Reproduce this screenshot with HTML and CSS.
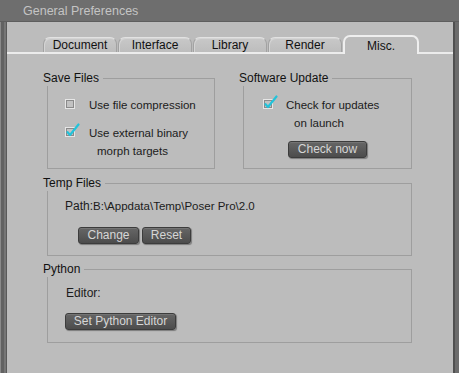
FILE: index.html
```html
<!DOCTYPE html>
<html lang="en">
<head>
  <meta charset="utf-8">
  <title>General Preferences</title>
  <link rel="stylesheet" href="styles.css">
</head>
<body>
  <div class="window">
    <div class="titlebar">General Preferences</div>
    <div class="frame">
      <main class="panel">
        <nav class="tabs">
          <div class="tab">Document</div>
          <div class="tab">Interface</div>
          <div class="tab">Library</div>
          <div class="tab">Render</div>
          <div class="tab active">Misc.</div>
        </nav>

        <div class="content">
          <div class="row">
            <section class="group save-files">
              <h3 class="group-title">Save Files</h3>
              <div class="check-row">
                <svg class="checkbox" width="15" height="15" viewBox="0 0 15 15">
                  <rect x="0.5" y="4.5" width="9" height="9" fill="#c2c2c2" stroke="#e6e6e6"/>
                  <rect x="1.5" y="5.5" width="7" height="7" fill="none" stroke="#8a8a8a"/>
                </svg>
                <span class="check-label">Use file compression</span>
              </div>
              <div class="check-row">
                <svg class="checkbox" width="15" height="15" viewBox="0 0 15 15">
                  <rect x="0.5" y="4.5" width="9" height="9" fill="#c2c2c2" stroke="#e6e6e6"/>
                  <rect x="1.5" y="5.5" width="7" height="7" fill="none" stroke="#8a8a8a"/>
                  <path d="M2.6 9.2 L5 12 L13.5 1.5" fill="none" stroke="#22c3da" stroke-width="2.2" stroke-linecap="round" stroke-linejoin="round"/>
                </svg>
                <span class="check-label">Use external binary<br><span class="indent">morph targets</span></span>
              </div>
            </section>

            <section class="group software-update">
              <h3 class="group-title">Software Update</h3>
              <div class="check-row">
                <svg class="checkbox" width="15" height="15" viewBox="0 0 15 15">
                  <rect x="0.5" y="4.5" width="9" height="9" fill="#c2c2c2" stroke="#e6e6e6"/>
                  <rect x="1.5" y="5.5" width="7" height="7" fill="none" stroke="#8a8a8a"/>
                  <path d="M2.6 9.2 L5 12 L13.5 1.5" fill="none" stroke="#22c3da" stroke-width="2.2" stroke-linecap="round" stroke-linejoin="round"/>
                </svg>
                <span class="check-label">Check for updates<br><span class="indent">on launch</span></span>
              </div>
              <div class="center">
                <button type="button" class="btn btn-check">Check now</button>
              </div>
            </section>
          </div>

          <section class="group temp-files">
            <h3 class="group-title">Temp Files</h3>
            <p class="field"><span class="field-name">Path:</span><span class="path">B:\Appdata\Temp\Poser Pro\2.0</span></p>
            <div class="buttons">
              <button type="button" class="btn btn-change">Change</button>
              <button type="button" class="btn btn-reset">Reset</button>
            </div>
          </section>

          <section class="group python">
            <h3 class="group-title">Python</h3>
            <p class="field"><span class="field-name">Editor:</span></p>
            <div class="buttons-left">
              <button type="button" class="btn btn-python">Set Python Editor</button>
            </div>
          </section>
        </div>
      </main>
    </div>
  </div>
</body>
</html>
```

FILE: styles.css
```css
html, body {
  margin: 0;
  padding: 0;
}
body {
  background-color: #6c6c6c;
  font-family: "Liberation Sans", Arial, sans-serif;
  width: 459px;
  height: 373px;
  overflow: hidden;
}
.window {
  display: flex;
  flex-direction: column;
  height: 373px;
}
.titlebar {
  height: 21px;
  line-height: 22px;
  padding-left: 23px;
  font-size: 12.5px;
  color: #c4c4c4;
  background-color: #6e6e6e;
  border-bottom: 1px solid #5e5e5e;
}
.frame {
  flex: 1;
  display: flex;
  padding-left: 7px;
  padding-right: 6px;
  background: linear-gradient(to right, #8a8a8a 0, #8a8a8a 1px, #626262 1px, #626262 4px, #767676 4px, #767676 6px, #5a5a5a 6px, #5a5a5a 7px, transparent 7px),
    linear-gradient(to left, #6c6c6c 0, #6c6c6c 4px, #505050 4px, #505050 6px, transparent 6px);
  background-color: #6c6c6c;
}
.panel {
  flex: 1;
  background-color: #bcbcbc;
  color: #1b1b1b;
}

/* tabs */
.tabs {
  display: flex;
  align-items: flex-end;
  height: 17px;
  margin-top: 13px;
  padding-left: 36px;
  border-bottom: 2px solid #ececec;
}
.tab {
  box-sizing: border-box;
  width: 74px;
  height: 15px;
  margin-right: 1px;
  border: 1px solid #a2a2a2;
  border-top-color: #e2e2e2;
  border-bottom: none;
  border-radius: 7px 7px 0 0;
  background: linear-gradient(#c8c8c8, #bdbdbd);
  box-shadow: inset 1px 1px 0 #d4d4d4;
  text-align: center;
  font-size: 12px;
  line-height: 14px;
  color: #111;
}
.tab.active {
  height: 19px;
  width: 76px;
  margin-bottom: -2px;
  border: 2px solid #efefef;
  border-bottom: none;
  background: #bcbcbc;
  box-shadow: none;
  line-height: 18px;
}

/* groups */
.content {
  padding: 0 41px 0 40px;
}
.row {
  display: flex;
  gap: 28px;
  margin-top: 24px;
}
.group {
  display: flex;
  flex-direction: column;
  border: 1px solid #9e9e9e;
  padding: 0 0 0 17px;
  margin: 0;
}
.save-files {
  width: 149px;
  padding-bottom: 8px;
}
.software-update {
  width: 148px;
  padding-left: 19px;
  padding-bottom: 10px;
}
.group-title {
  align-self: flex-start;
  margin: -8px 0 0 -22px;
  padding: 0 4px 0 0;
  background-color: #bcbcbc;
  font-size: 12px;
  font-weight: normal;
  line-height: 15px;
  color: #111;
}
.software-update .group-title {
  margin-left: -24px;
}
.check-row {
  display: flex;
  align-items: flex-start;
  margin-top: 10px;
  font-size: 11.5px;
  line-height: 18px;
}
.checkbox {
  flex: none;
  margin-top: -1px;
  margin-right: 9px;
}
.software-update .checkbox {
  margin-right: 8px;
}
.indent {
  padding-left: 8px;
}
.center {
  display: flex;
  justify-content: center;
  margin: 9px 0 0 -19px;
}

.temp-files {
  margin-top: 14px;
  padding-bottom: 11px;
}
.python {
  margin-top: 13px;
  padding-bottom: 12px;
}
.field {
  margin: 6px 0 0;
  font-size: 12px;
  line-height: 18px;
}
.python .field {
  margin-top: 7px;
  padding-left: 1px;
}
.path {
  font-size: 11.5px;
}
.buttons {
  display: flex;
  gap: 3px;
  margin: 12px 0 0 13px;
}
.buttons-left {
  display: flex;
  margin-top: 11px;
}

/* buttons */
.btn {
  box-sizing: border-box;
  height: 17px;
  padding: 0;
  border: 1px solid #3c3c3c;
  border-radius: 3px;
  background: linear-gradient(#666, #4c4c4c);
  box-shadow: 1px 1px 1px rgba(0, 0, 0, 0.35), inset 0 1px 0 #747474;
  color: #d6d6d6;
  font-family: "Liberation Sans", Arial, sans-serif;
  font-size: 12px;
  line-height: 15px;
  text-align: center;
}
.btn-check {
  width: 79px;
}
.btn-change {
  width: 61px;
}
.btn-reset {
  width: 49px;
}
.btn-python {
  width: 111px;
}
```
